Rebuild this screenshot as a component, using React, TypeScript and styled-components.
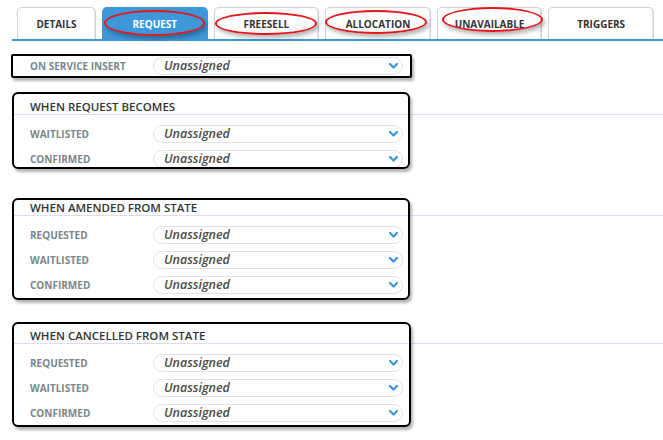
import React from "react";
import styled, { createGlobalStyle } from "styled-components";

const GlobalStyle = createGlobalStyle`
  body {
    margin: 0;
    background: #fff;
    font-family: "Open Sans", "Noto Sans", sans-serif;
  }
`;

const tabs = [
  { name: "Details", width: 79 },
  { name: "Request", width: 105.6, active: true },
  { name: "Freesell", width: 105.6 },
  { name: "Allocation", width: 105.6 },
  { name: "Unavailable", width: 105.6 },
  { name: "Triggers", width: 105.6 },
];

const sections = [
  { title: "When request becomes", gap: 16, rows: ["Waitlisted", "Confirmed"] },
  {
    title: "When amended from state",
    gap: 24,
    rows: ["Requested", "Waitlisted", "Confirmed"],
  },
  {
    title: "When cancelled from state",
    gap: 26,
    rows: ["Requested", "Waitlisted", "Confirmed"],
  },
];

// hand-drawn markup that sits over the screenshot
const boxes = [
  { x: 11, y: 54, w: 401, h: 24, r: 2 },
  { x: 12, y: 92, w: 398, h: 77, r: 6 },
  { x: 12, y: 198, w: 398, h: 102, r: 6 },
  { x: 12, y: 322, w: 399, h: 105, r: 6 },
];

const rings = [
  { x: 104, y: 10, w: 101, h: 26 },
  { x: 215, y: 12, w: 102, h: 23 },
  { x: 325, y: 10, w: 102, h: 24 },
  { x: 442, y: 7, w: 101, h: 25 },
];

function Chevron() {
  return (
    <svg width="9" height="6" viewBox="0 0 9 6">
      <path
        d="M1 1 L4.5 4.6 L8 1"
        fill="none"
        stroke="#3a97dc"
        strokeWidth="2.2"
        strokeLinecap="round"
        strokeLinejoin="round"
      />
    </svg>
  );
}

function Field({ label }: { label: string }) {
  return (
    <Row>
      <Label>{label}</Label>
      <Select>
        <span>Unassigned</span>
        <Chevron />
      </Select>
    </Row>
  );
}

export default function App() {
  return (
    <Page>
      <GlobalStyle />
      <TabBar>
        {tabs.map((t) => (
          <Tab key={t.name} $w={t.width} $active={!!t.active}>
            {t.name}
          </Tab>
        ))}
      </TabBar>
      <Content>
        <InsertRow>
          <Field label="On service insert" />
        </InsertRow>
        {sections.map((s) => (
          <Section key={s.title} $gap={s.gap}>
            <SectionHead>{s.title}</SectionHead>
            <Rows>
              {s.rows.map((r) => (
                <Field key={r} label={r} />
              ))}
            </Rows>
          </Section>
        ))}
      </Content>
      {boxes.map((b, i) => (
        <MarkBox key={i} $x={b.x} $y={b.y} $w={b.w} $h={b.h} $r={b.r} />
      ))}
      {rings.map((r, i) => (
        <MarkRing key={i} $x={r.x} $y={r.y} $w={r.w} $h={r.h} />
      ))}
    </Page>
  );
}

const Page = styled.div`
  position: relative;
  width: 663px;
  height: 440px;
  overflow: hidden;
`;

const TabBar = styled.div`
  display: flex;
  gap: 6px;
  margin: 7px 0 0 12px;
  padding-left: 5px;
  border-bottom: 2px solid #3d97d9;
`;

const Tab = styled.div<{ $w: number; $active: boolean }>`
  box-sizing: border-box;
  width: ${(p) => p.$w}px;
  height: 32px;
  display: flex;
  align-items: center;
  justify-content: center;
  border: 1px solid ${(p) => (p.$active ? "#3d97d9" : "#d0d3d6")};
  border-bottom: none;
  border-radius: 5px 5px 0 0;
  background: ${(p) => (p.$active ? "#3d97d9" : "#fff")};
  color: ${(p) => (p.$active ? "#fff" : "#333")};
  box-shadow: ${(p) => (p.$active ? "none" : "inset -1px 0 1px #e2e4e6")};
  font-size: 10px;
  font-weight: 700;
  text-transform: uppercase;
`;

const Content = styled.div`
  padding-left: 12px;
`;

const InsertRow = styled.div`
  margin-top: 12px;
`;

const Section = styled.div<{ $gap: number }>`
  margin-top: ${(p) => p.$gap}px;
`;

const SectionHead = styled.div`
  height: 20px;
  display: flex;
  align-items: flex-end;
  padding-left: 18px;
  border-bottom: 1px solid #dedcf2;
  color: #333;
  font-size: 11.5px;
  font-weight: 600;
  line-height: 14px;
  text-transform: uppercase;
`;

const Rows = styled.div`
  padding-top: 6px;
`;

const Row = styled.div`
  height: 25px;
  display: flex;
  align-items: center;
`;

const Label = styled.div`
  width: 123px;
  padding-left: 18px;
  color: #7a8689;
  font-size: 10px;
  font-weight: 700;
  text-transform: uppercase;
  white-space: nowrap;
`;

const Select = styled.div`
  box-sizing: border-box;
  width: 250px;
  height: 18px;
  display: flex;
  align-items: center;
  justify-content: space-between;
  padding: 0 4px 0 10px;
  border: 1px solid #e2e2e2;
  border-radius: 9px;
  background: #fff;
  span {
    color: #4a4a4a;
    font-size: 12.5px;
    font-style: italic;
    font-weight: 600;
  }
`;

const MarkBox = styled.div<{
  $x: number;
  $y: number;
  $w: number;
  $h: number;
  $r: number;
}>`
  position: absolute;
  box-sizing: border-box;
  left: ${(p) => p.$x}px;
  top: ${(p) => p.$y}px;
  width: ${(p) => p.$w}px;
  height: ${(p) => p.$h}px;
  border: 2px solid #000;
  border-radius: ${(p) => p.$r}px;
  box-shadow: 2px 3px 3px rgba(0, 0, 0, 0.3);
  pointer-events: none;
`;

const MarkRing = styled.div<{ $x: number; $y: number; $w: number; $h: number }>`
  position: absolute;
  box-sizing: border-box;
  left: ${(p) => p.$x}px;
  top: ${(p) => p.$y}px;
  width: ${(p) => p.$w}px;
  height: ${(p) => p.$h}px;
  border: 2.5px solid #e3171c;
  border-radius: 50%;
  box-shadow: 2px 3px 4px rgba(0, 0, 0, 0.3);
  pointer-events: none;
`;
